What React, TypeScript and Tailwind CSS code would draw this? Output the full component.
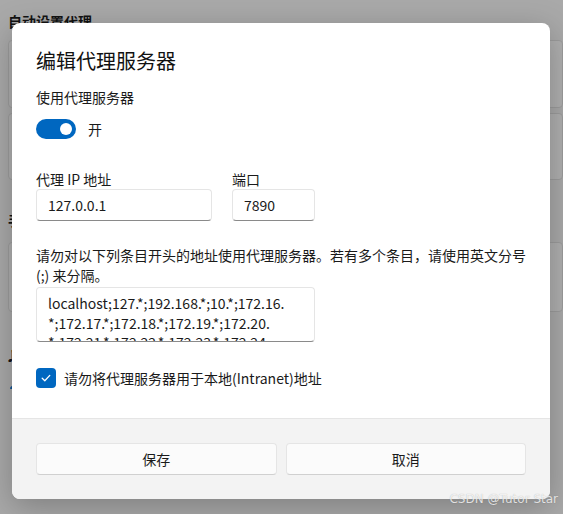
import React from "react";

function Check() {
  return (
    <svg width="12" height="12" viewBox="0 0 12 12" fill="none">
      <path d="M2.2 6.3 L4.8 8.8 L9.8 3.4" stroke="white" strokeWidth="1.3" strokeLinecap="round" strokeLinejoin="round" />
    </svg>
  );
}

export default function App() {
  return (
    <div className="relative w-[563px] h-[514px] overflow-hidden font-['Noto_Sans_CJK_SC','Noto_Sans',sans-serif] text-[#1a1a1a]">
      {/* background settings page */}
      <div className="w-full h-full bg-[#f3f3f3] pl-[8px] pt-[11px] flex flex-col">
        <div className="text-[14px] leading-[20px] font-semibold">自动设置代理</div>
        <div className="mt-[9px] h-[68px] rounded-[4px] border border-[#e0e0e0] bg-[#fbfbfb]" />
        <div className="mt-[5px] h-[67px] rounded-[4px] border border-[#e0e0e0] bg-[#fbfbfb]" />
        <div className="mt-[30px] text-[14px] leading-[20px] font-semibold">手动设置代理</div>
        <div className="mt-[12px] h-[70px] rounded-[4px] border border-[#e0e0e0] bg-[#fbfbfb]" />
        <div className="mt-[32px] flex items-center gap-2 text-[14px] leading-[20px]">
          <span>♫</span>
          <span>获取帮助</span>
        </div>
        <div className="mt-[6px] flex items-center gap-2 text-[14px] leading-[20px]">
          <span>👤</span>
          <span>提供反馈</span>
        </div>
      </div>

      {/* overlay */}
      <div className="absolute inset-0 bg-black/30" />

      {/* dialog */}
      <div className="absolute left-[12px] top-[23px] w-[538px] h-[476px] rounded-[8px] bg-white overflow-hidden flex flex-col shadow-[0_8px_32px_rgba(0,0,0,0.25)]">
        <div className="flex-1 px-[24px] pt-[24px] flex flex-col">
          <div className="text-[20px] leading-[28px] font-normal text-[#111]">编辑代理服务器</div>
          <div className="mt-[12px] text-[14px] leading-[20px]">使用代理服务器</div>
          <div className="mt-[12px] flex items-center gap-[12px] h-[20px]">
            <div className="w-[40px] h-[20px] rounded-full bg-[#0067c0] flex items-center justify-end pr-[4px]">
              <div className="w-[12px] h-[12px] rounded-full bg-white" />
            </div>
            <span className="text-[14px] leading-[20px]">开</span>
          </div>
          <div className="mt-[30px] flex gap-[20px]">
            <div className="flex flex-col w-[176px]">
              <div className="text-[14px] leading-[20px]">代理 IP 地址</div>
              <div className="h-[32px] rounded-[4px] border border-[#e5e5e5] border-b-[#8a8a8a] bg-white px-[11px] flex items-center text-[14px]">
                127.0.0.1
              </div>
            </div>
            <div className="flex flex-col w-[83px]">
              <div className="text-[14px] leading-[20px]">端口</div>
              <div className="h-[32px] rounded-[4px] border border-[#e5e5e5] border-b-[#8a8a8a] bg-white px-[11px] flex items-center text-[14px]">
                7890
              </div>
            </div>
          </div>
          <div className="mt-[24px] text-[14px] leading-[20px]">
            请勿对以下列条目开头的地址使用代理服务器。若有多个条目，请使用英文分号
            <br />
            (;) 来分隔。
          </div>
          <div className="mt-[2px] w-[279px] h-[55px] rounded-[4px] border border-[#e5e5e5] border-b-[#8a8a8a] bg-white px-[11px] pt-[5px] overflow-hidden text-[14px] leading-[20px] whitespace-nowrap">
            <div>localhost;127.*;192.168.*;10.*;172.16.</div>
            <div>*;172.17.*;172.18.*;172.19.*;172.20.</div>
            <div className="-mt-[1px]">*;172.21.*;172.22.*;172.23.*;172.24.</div>
          </div>
          <div className="mt-[26px] flex items-center gap-[8px]">
            <div className="w-[20px] h-[20px] rounded-[4px] bg-[#0067c0] flex items-center justify-center">
              <Check />
            </div>
            <span className="text-[14px] leading-[20px]">请勿将代理服务器用于本地(Intranet)地址</span>
          </div>
        </div>
        <div className="h-[81px] border-t border-[#e5e5e5] bg-[#f3f3f3] px-[24px] pt-[24px]">
          <div className="grid grid-cols-2 gap-[9px]">
            <button className="h-[32px] rounded-[4px] border border-[#e5e5e5] border-b-[#d0d0d0] bg-[#fbfbfb] text-[14px] text-[#1a1a1a]">
              保存
            </button>
            <button className="h-[32px] rounded-[4px] border border-[#e5e5e5] border-b-[#d0d0d0] bg-[#fbfbfb] text-[14px] text-[#1a1a1a]">
              取消
            </button>
          </div>
        </div>
      </div>

      {/* watermark */}
      <div className="absolute right-[5px] bottom-[8px] text-[12px] leading-[14px] text-white/80 font-['DejaVu_Sans',sans-serif] [text-shadow:0_0_1px_rgba(0,0,0,0.3)]">
        CSDN @Tutor Star
      </div>
    </div>
  );
}
